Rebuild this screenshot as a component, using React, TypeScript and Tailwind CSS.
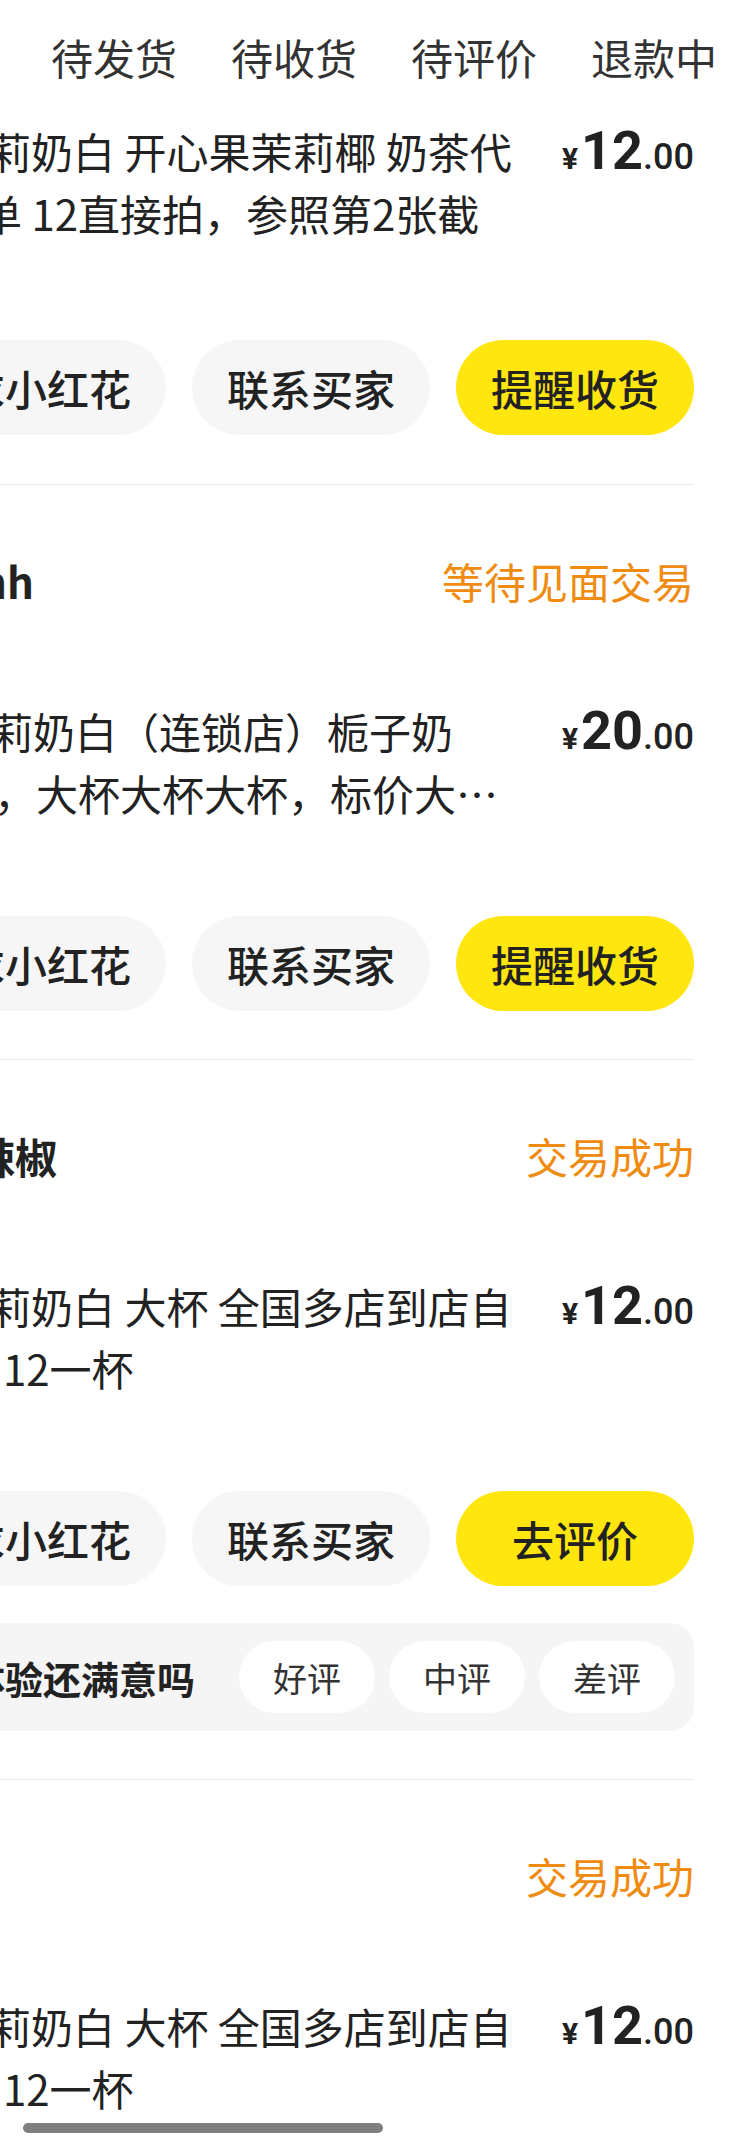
import React from 'react'

type Line = { text: string; offset: string }

type Order = {
  user: string
  userOffset: string
  status: string
  lines: Line[]
  price: string
  action: string
  rate?: boolean
}

const tabs = ['待发货', '待收货', '待评价', '退款中']

const firstLines: Line[] = [
  { text: '莉奶白 开心果茉莉椰 奶茶代', offset: '-ml-[11px]' },
  { text: '单 12直接拍，参照第2张截', offset: '-ml-[20px]' },
]

const orders: Order[] = [
  {
    user: 'nh',
    userOffset: '-ml-[20px]',
    status: '等待见面交易',
    lines: [
      { text: '莉奶白（连锁店）栀子奶', offset: '-ml-[9px]' },
      { text: '，大杯大杯大杯，标价大…', offset: '-ml-[6px]' },
    ],
    price: '20',
    action: '提醒收货',
  },
  {
    user: '辣椒',
    userOffset: '-ml-[27px]',
    status: '交易成功',
    lines: [
      { text: '莉奶白 大杯 全国多店到店自', offset: '-ml-[11px]' },
      { text: '12一杯', offset: 'ml-[3px]' },
    ],
    price: '12',
    action: '去评价',
    rate: true,
  },
  {
    user: '',
    userOffset: '',
    status: '交易成功',
    lines: [
      { text: '莉奶白 大杯 全国多店到店自', offset: '-ml-[11px]' },
      { text: '12一杯', offset: 'ml-[3px]' },
    ],
    price: '12',
    action: '去评价',
  },
]

function Price({ value }: { value: string }) {
  return (
    <div className="shrink-0 whitespace-nowrap text-[42px] leading-[62px] text-[#222]">
      <span className="mr-[3px] font-['Roboto',sans-serif] text-[30px] font-bold leading-none">¥</span>
      <span className="font-['Roboto',sans-serif] text-[54px] font-bold leading-none">{value}</span>
      <span className="font-['Roboto',sans-serif] text-[36px] font-medium leading-none">.00</span>
    </div>
  )
}

function ProductRow({ lines, price }: { lines: Line[]; price: string }) {
  return (
    <div className="flex items-start">
      <div className="min-w-0 flex-1 whitespace-nowrap text-[42px] leading-[62px] text-[#222]">
        {lines.map((l, i) => (
          <div key={i} className={l.offset}>{l.text}</div>
        ))}
      </div>
      <Price value={price} />
    </div>
  )
}

function ActionRow({ action }: { action: string }) {
  const buttons = ['求小红花', '联系买家', action]
  return (
    <div className="flex justify-end gap-[26px]">
      {buttons.map((b, i) => (
        <div
          key={b}
          className={`flex h-[95px] w-[238px] shrink-0 items-center justify-center rounded-full text-[42px] font-medium text-[#222] ${
            i === 2 ? 'bg-[#ffe60f]' : 'bg-[#f6f6f6]'
          }`}
        >
          {b}
        </div>
      ))}
    </div>
  )
}

function RateBar() {
  return (
    <div className="-ml-[40px] mt-[37px] flex h-[108px] items-center justify-between rounded-[24px] bg-[#f5f5f5] pr-[19px]">
      <span className="ml-[7px] whitespace-nowrap text-[38px] font-bold text-[#222]">体验还满意吗</span>
      <div className="flex gap-[14px]">
        {['好评', '中评', '差评'].map(p => (
          <div key={p} className="flex h-[72px] w-[136px] items-center justify-center rounded-full bg-white text-[34px] text-[#333]">
            {p}
          </div>
        ))}
      </div>
    </div>
  )
}

function OrderCard({ order }: { order: Order }) {
  return (
    <div className="pt-[65px]">
      <div className="flex h-[62px] items-center justify-between whitespace-nowrap text-[42px] leading-[62px]">
        <span className={`font-bold text-[#222] ${order.userOffset}`}>{order.user}</span>
        <span className="text-[#f08b12]">{order.status}</span>
      </div>
      <div className="mt-[88px] h-[216px]">
        <ProductRow lines={order.lines} price={order.price} />
      </div>
      <ActionRow action={order.action} />
      {order.rate && <RateBar />}
      <div className="mt-[48px] h-px bg-[#ebebeb]" />
    </div>
  )
}

export default function App() {
  return (
    <div className="relative h-[2153px] w-[742px] overflow-hidden bg-white font-['Noto_Sans_CJK_SC',sans-serif]">
      <div className="flex gap-[54px] whitespace-nowrap pl-[51px] pt-[26px] text-[42px] leading-[62px] text-[#333]">
        {tabs.map(t => (
          <span key={t}>{t}</span>
        ))}
      </div>

      <div className="pr-[48px]">
        <div className="mt-[32px] h-[220px]">
          <ProductRow lines={firstLines} price="12" />
        </div>
        <ActionRow action="提醒收货" />
        <div className="mt-[49px] h-px bg-[#ebebeb]" />

        {orders.map((o, i) => (
          <OrderCard key={i} order={o} />
        ))}
      </div>

      {/* scroll indicator */}
      <div className="absolute left-[23px] top-[2123px] h-[10px] w-[360px] rounded-full bg-[#808080]" />
    </div>
  )
}
